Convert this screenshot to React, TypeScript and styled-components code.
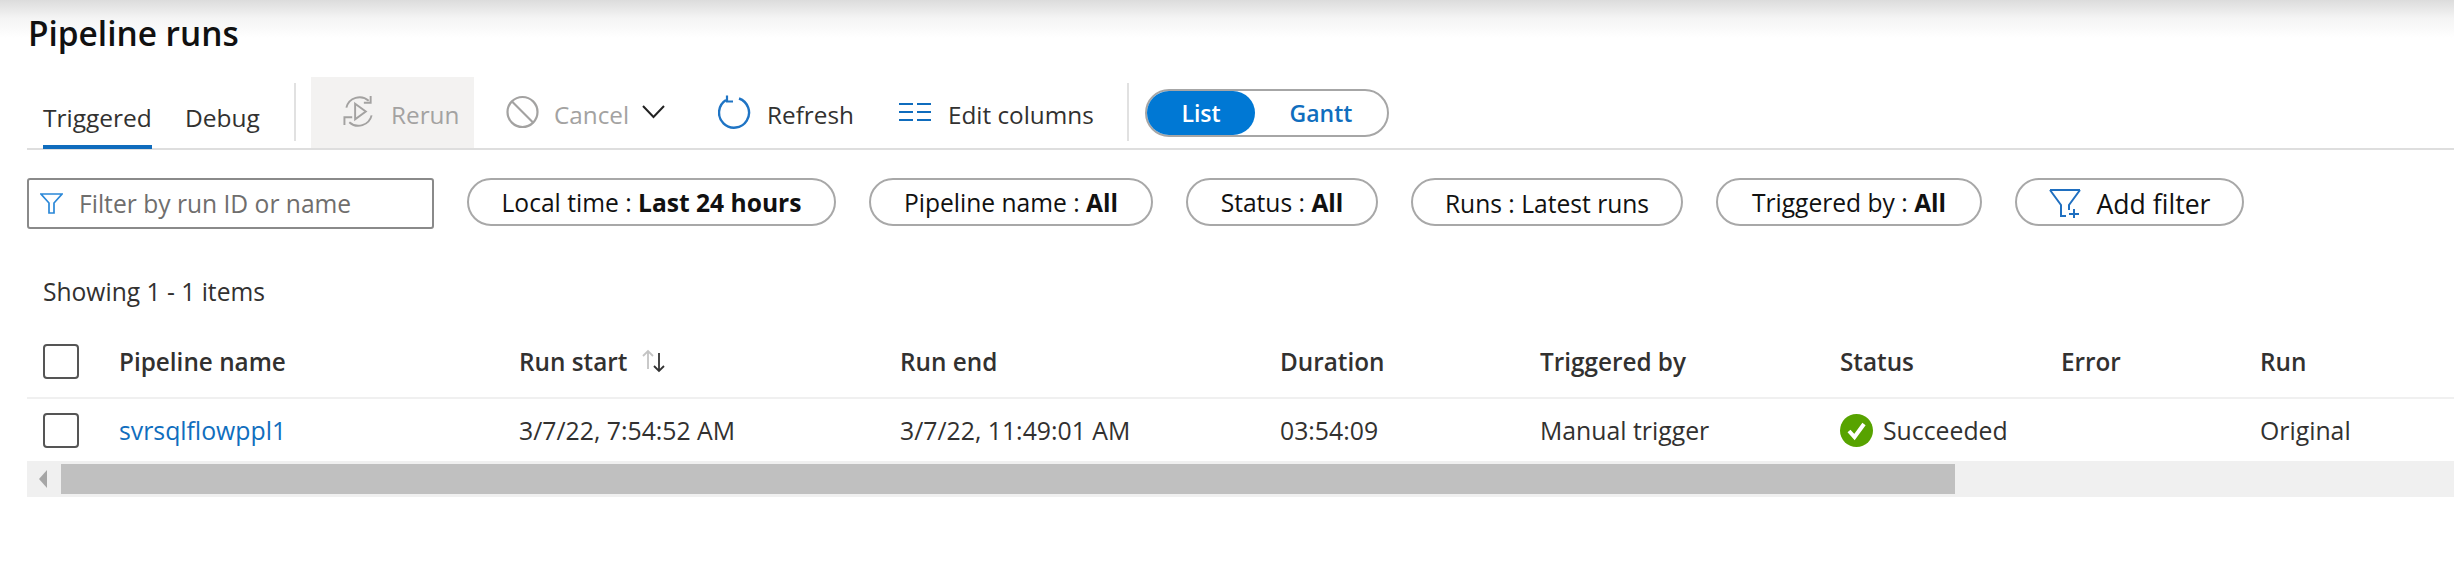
import React from "react";
import styled, { createGlobalStyle } from "styled-components";

const Global = createGlobalStyle`
  html, body { margin: 0; padding: 0; background: #fff; overflow: hidden; }
  body { font-family: "Open Sans", "Noto Sans", "Liberation Sans", sans-serif; color: #323130; }
`;

const Page = styled.div`
  width: 2454px;
  height: 576px;
  background: linear-gradient(to bottom, #dcdcdc 0, #f4f4f4 18px, #fff 38px);
`;

const Title = styled.h1`
  margin: 0;
  padding: 11px 0 0 28px;
  height: 77px;
  box-sizing: border-box;
  font-size: 33.4px;
  line-height: 44px;
  font-weight: 600;
  color: #111;
`;

const Toolbar = styled.div`
  display: flex;
  align-items: stretch;
  height: 71px;
  margin-left: 27px;
  border-bottom: 2px solid #dedede;
`;

const Tab = styled.div<{ $active?: boolean; $ml: number; $w: number }>`
  margin-left: ${(p) => p.$ml}px;
  width: ${(p) => p.$w}px;
  height: 72px;
  padding-top: 24px;
  box-sizing: border-box;
  font-size: 24.5px;
  line-height: 34px;
  border-bottom: 4px solid ${(p) => (p.$active ? "#0f6cbd" : "transparent")};
`;

const Sep = styled.div<{ $ml: number }>`
  width: 2px;
  height: 58px;
  margin: 6px 0 0 ${(p) => p.$ml}px;
  background: #e1e1e1;
`;

const ToolButton = styled.div<{ $ml: number; $w: number; $disabled?: boolean; $shade?: boolean }>`
  display: flex;
  align-items: center;
  margin-left: ${(p) => p.$ml}px;
  width: ${(p) => p.$w}px;
  height: 71px;
  padding-top: 3px;
  box-sizing: border-box;
  font-size: 24.3px;
  color: ${(p) => (p.$disabled ? "#a3a2a1" : "#323130")};
  background: ${(p) => (p.$shade ? "#f3f2f1" : "transparent")};
`;

const IconSlot = styled.span<{ $pl: number; $gap: number; $w: number }>`
  display: inline-flex;
  flex: none;
  width: ${(p) => p.$w}px;
  margin-left: ${(p) => p.$pl}px;
  margin-right: ${(p) => p.$gap}px;
  margin-bottom: 5px;
`;

const Toggle = styled.div`
  display: flex;
  width: 244px;
  height: 48px;
  margin: 12px 0 0 16px;
  box-sizing: border-box;
  border: 2px solid #a6a6a6;
  border-radius: 24px;
  font-size: 23px;
  font-weight: 600;
`;

const ToggleOption = styled.div<{ $on?: boolean; $w: number }>`
  display: flex;
  align-items: center;
  justify-content: center;
  width: ${(p) => p.$w}px;
  border-radius: 22px;
  background: ${(p) => (p.$on ? "#0078d4" : "transparent")};
  color: ${(p) => (p.$on ? "#fff" : "#106ebe")};
`;

const FilterRow = styled.div`
  display: flex;
  gap: 33px;
  margin: 28px 0 0 27px;
  align-items: flex-start;
`;

const SearchBox = styled.div`
  display: flex;
  align-items: center;
  width: 407px;
  height: 51px;
  box-sizing: border-box;
  border: 2px solid #8a8a8a;
  border-radius: 3px;
  padding-left: 11px;
  gap: 16px;
  font-size: 24.6px;
  color: #6f6e6d;
`;

const Pill = styled.div<{ $w: number; $low?: boolean }>`
  display: flex;
  align-items: center;
  justify-content: center;
  width: ${(p) => p.$w}px;
  height: 48px;
  padding-top: ${(p) => (p.$low ? 3 : 0)}px;
  box-sizing: border-box;
  border: 2px solid #a8a8a8;
  border-radius: 24px;
  font-size: 24.6px;
  color: #111;
  white-space: pre;
`;

const Strong = styled.b`
  font-weight: 700;
`;

const AddFilter = styled(Pill)`
  font-size: 26.6px;
  gap: 16px;
`;

const Showing = styled.div`
  margin: 46px 0 0 43px;
  height: 34px;
  font-size: 24.6px;
  line-height: 34px;
`;

const cols = "92px 400px 381px 380px 260px 300px 221px 199px 1fr";

const HeadRow = styled.div`
  display: grid;
  grid-template-columns: ${cols};
  align-items: center;
  height: 74px;
  margin: 16px 0 0 27px;
  box-sizing: border-box;
  border-bottom: 2px solid #f0f0f0;
  font-size: 24.3px;
  font-weight: 600;
`;

const BodyRow = styled.div`
  display: grid;
  grid-template-columns: ${cols};
  align-items: center;
  height: 62px;
  margin-left: 27px;
  box-sizing: border-box;
  font-size: 24.8px;
`;

const Check = styled.span`
  display: block;
  width: 36px;
  height: 35px;
  margin-left: 16px;
  box-sizing: border-box;
  border: 2px solid #555;
  border-radius: 4px;
`;

const Cell = styled.div`
  display: flex;
  align-items: center;
  white-space: nowrap;
`;

const NameLink = styled.a`
  color: #106ebe;
`;

const Scrollbar = styled.div`
  display: flex;
  align-items: center;
  height: 36px;
  margin-left: 27px;
  background: #f0f0f0;
`;

const ArrowLeft = styled.span`
  width: 0;
  height: 0;
  margin-left: 12px;
  border-style: solid;
  border-width: 9px 8px 9px 0;
  border-color: transparent #a6a6a6 transparent transparent;
`;

const Thumb = styled.div`
  width: 1894px;
  height: 30px;
  margin-left: 14px;
  background: #c0c0c0;
`;

const RerunIcon = () => (
  <svg width="32" height="33" viewBox="0 0 32 34" fill="none" stroke="#a3a2a1" strokeWidth="2">
    <path d="M3 13 A14 14 0 0 1 26 6" />
    <path d="M28 1v7h-7" />
    <path d="M29 21 A14 14 0 0 1 6 28" />
    <path d="M1 31v-8h8" />
    <path d="M12 9l11 8-11 8z" />
  </svg>
);

const CancelIcon = () => (
  <svg width="33" height="34" viewBox="0 0 33 34" fill="none" stroke="#a3a2a1" strokeWidth="2.2">
    <circle cx="16.5" cy="17" r="15" />
    <path d="M6 6.5l21 21" />
  </svg>
);

const ChevronIcon = () => (
  <svg width="23" height="14" viewBox="0 0 23 14" fill="none" stroke="#222" strokeWidth="2">
    <path d="M1 1l10.5 11L22 1" />
  </svg>
);

const RefreshIcon = () => (
  <svg width="33" height="34" viewBox="0 0 33 34" fill="none" stroke="#1f74c4" strokeWidth="2.4">
    <path d="M21 3.5A15 15 0 1 1 8 5" />
    <path d="M9 0.5v6h6" strokeWidth="2.2" />
  </svg>
);

const ColumnsIcon = () => (
  <svg width="32" height="20" viewBox="0 0 32 20" stroke="#0f6cbd" strokeWidth="2.2">
    <path d="M0 2h14M0 10h14M0 18h14M18 2h14M18 10h14M18 18h14" />
  </svg>
);

const FunnelIcon = () => (
  <svg width="23" height="21" viewBox="0 0 23 21" fill="none" stroke="#2b88d8" strokeWidth="1.7">
    <path d="M1 1h21l-8 9v10h-5V10z" />
  </svg>
);

const AddFilterIcon = () => (
  <svg width="32" height="29" viewBox="0 0 32 29" fill="none" stroke="#1f6fc0" strokeWidth="2">
    <path d="M1 1h30M1 1l11 15v11h5M31 1L20 16v5" />
    <path d="M20 25h10M25 20v9" />
  </svg>
);

const SortIcon = () => (
  <svg width="30" height="24" viewBox="0 0 30 24" fill="none" strokeWidth="1.8">
    <path d="M9 20V2M4 7l5-5 5 5" stroke="#c4c4c4" />
    <path d="M20 4v18M15 17l5 5 5-5" stroke="#333" />
  </svg>
);

const SuccessIcon = () => (
  <svg width="33" height="33" viewBox="0 0 33 33">
    <circle cx="16.5" cy="16.5" r="16.5" fill="#57a300" />
    <path d="M9 17l5.5 6L24 10" fill="none" stroke="#fff" strokeWidth="4" />
  </svg>
);

const SuccessSlot = styled.span`
  display: inline-flex;
  margin-right: 10px;
`;

const SortSlot = styled.span`
  display: inline-flex;
  margin-left: 12px;
`;

export default function App() {
  return (
    <Page>
      <Global />
      <Title>Pipeline runs</Title>
      <Toolbar>
        <Tab $active $ml={16} $w={109}>Triggered</Tab>
        <Tab $ml={33} $w={76}>Debug</Tab>
        <Sep $ml={33} />
        <ToolButton $ml={15} $w={163} $disabled $shade>
          <IconSlot $pl={32} $gap={16} $w={32}><RerunIcon /></IconSlot>
          Rerun
        </ToolButton>
        <ToolButton $ml={0} $w={244} $disabled>
          <IconSlot $pl={32} $gap={15} $w={33}><CancelIcon /></IconSlot>
          Cancel
          <IconSlot $pl={13} $gap={0} $w={23}><ChevronIcon /></IconSlot>
        </ToolButton>
        <ToolButton $ml={0} $w={181}>
          <IconSlot $pl={0} $gap={16} $w={33}><RefreshIcon /></IconSlot>
          Refresh
        </ToolButton>
        <ToolButton $ml={0} $w={228}>
          <IconSlot $pl={0} $gap={17} $w={32}><ColumnsIcon /></IconSlot>
          Edit columns
        </ToolButton>
        <Sep $ml={0} />
        <Toggle>
          <ToggleOption $on $w={108}>List</ToggleOption>
          <ToggleOption $w={132}>Gantt</ToggleOption>
        </Toggle>
      </Toolbar>
      <FilterRow>
        <SearchBox>
          <FunnelIcon />
          Filter by run ID or name
        </SearchBox>
        <Pill $w={369}>Local time : <Strong>Last 24 hours</Strong></Pill>
        <Pill $w={284}>Pipeline name : <Strong>All</Strong></Pill>
        <Pill $w={192}>Status : <Strong>All</Strong></Pill>
        <Pill $w={272} $low>Runs : Latest runs</Pill>
        <Pill $w={266}>Triggered by : <Strong>All</Strong></Pill>
        <AddFilter $w={229} $low><AddFilterIcon />Add filter</AddFilter>
      </FilterRow>
      <Showing>Showing 1 - 1 items</Showing>
      <HeadRow>
        <Cell><Check /></Cell>
        <Cell>Pipeline name</Cell>
        <Cell>Run start<SortSlot><SortIcon /></SortSlot></Cell>
        <Cell>Run end</Cell>
        <Cell>Duration</Cell>
        <Cell>Triggered by</Cell>
        <Cell>Status</Cell>
        <Cell>Error</Cell>
        <Cell>Run</Cell>
      </HeadRow>
      <BodyRow>
        <Cell><Check /></Cell>
        <Cell><NameLink>svrsqlflowppl1</NameLink></Cell>
        <Cell>3/7/22, 7:54:52 AM</Cell>
        <Cell>3/7/22, 11:49:01 AM</Cell>
        <Cell>03:54:09</Cell>
        <Cell>Manual trigger</Cell>
        <Cell><SuccessSlot><SuccessIcon /></SuccessSlot>Succeeded</Cell>
        <Cell />
        <Cell>Original</Cell>
      </BodyRow>
      <Scrollbar>
        <ArrowLeft />
        <Thumb />
      </Scrollbar>
    </Page>
  );
}
